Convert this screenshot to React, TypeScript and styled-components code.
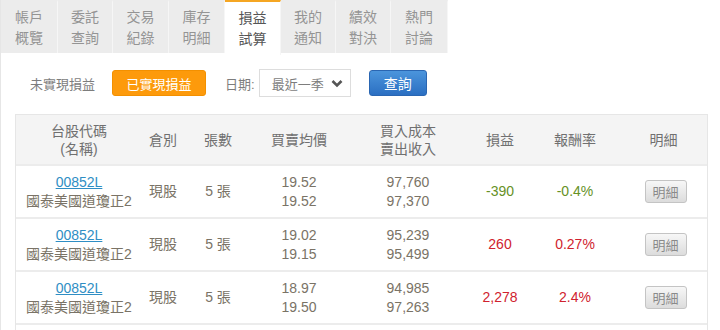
import React, { useState } from "react";
import styled, { createGlobalStyle } from "styled-components";

const GlobalStyle = createGlobalStyle`
  body {
    margin: 0;
    background: #fff;
    font-family: "Liberation Sans", "Noto Sans CJK TC", sans-serif;
    color: #7a7366;
  }
`;

const Page = styled.div`
  width: 720px;
  height: 330px;
  overflow: hidden;
  box-sizing: border-box;
  border-left: 1px solid #e6e6e6;
`;

const TabBar = styled.ul`
  margin: 0;
  padding: 0;
  list-style: none;
  display: flex;
  height: 53px;
  background: #fff;
`;

const Tab = styled.li<{ $active?: boolean; $w: number }>`
  width: ${(p) => p.$w}px;
  box-sizing: border-box;
  display: flex;
  flex-direction: column;
  align-items: center;
  justify-content: center;
  font-size: 14px;
  line-height: 21px;
  color: ${(p) => (p.$active ? "#555" : "#949494")};
  background: ${(p) => (p.$active ? "#fff" : "#ececec")};
  border-top: 2px solid ${(p) => (p.$active ? "#f5a623" : "#ececec")};
  border-right: 1px solid #f6f6f6;
  height: ${(p) => (p.$active ? "55px" : "53px")};
`;

const FilterRow = styled.div`
  display: flex;
  align-items: center;
  height: 28px;
  margin: 16px 0 0 29px;
  font-size: 13px;
`;

const Label = styled.span`
  color: #7d7d7d;
  margin-right: 17px;
`;

const OrangeButton = styled.button`
  font-family: inherit;
  font-size: 13px;
  color: #fff;
  background: #fd9a0b;
  border: 1px solid #f39000;
  border-radius: 3px;
  width: 94px;
  height: 26px;
  padding: 0;
  margin-right: 19px;
`;

const SelectBox = styled.div`
  display: flex;
  align-items: center;
  justify-content: space-between;
  box-sizing: border-box;
  width: 92px;
  height: 28px;
  border: 1px solid #ddd;
  padding: 0 7px 0 12px;
  margin: 0 18px 0 4px;
  color: #7d7d7d;
`;

const BlueButton = styled.button`
  font-family: inherit;
  font-size: 14px;
  color: #fff;
  background: linear-gradient(#4b95dc, #2b6fc2);
  border: 1px solid #2a66b2;
  border-radius: 3px;
  width: 58px;
  height: 26px;
  padding: 0;
`;

const cols = "126px 42px 68px 94px 124px 60px 90px 87px";

const Table = styled.div`
  margin: 17px 0 0 14px;
  width: 691px;
  border: 1px solid #e6e6e6;
  border-bottom: none;
  font-size: 14px;
`;

const HeadRow = styled.div`
  display: grid;
  grid-template-columns: ${cols};
  height: 49px;
  background: #f4f4f4;
  color: #707070;
  line-height: 18px;
`;

const Row = styled.div`
  display: grid;
  grid-template-columns: ${cols};
  height: 51px;
  border-top: 2px solid #ececec;
  line-height: 19px;
`;

const Cell = styled.div<{ $tone?: "up" | "down" }>`
  display: flex;
  flex-direction: column;
  align-items: center;
  justify-content: center;
  text-align: center;
  color: ${(p) => (p.$tone === "up" ? "#d0222e" : p.$tone === "down" ? "#669126" : "inherit")};
`;

const Code = styled.a`
  color: #2f8ec4;
  text-decoration: underline;
`;

const DetailButton = styled.button`
  font-family: inherit;
  font-size: 13px;
  color: #8a8a8a;
  background: linear-gradient(#f7f7f7, #dcdcdc);
  border: 1px solid #c4c4c4;
  border-radius: 3px;
  width: 42px;
  height: 23px;
  padding: 0;
  margin-left: 4px;
`;

const tabs = [
  ["帳戶", "概覽", 57],
  ["委託", "查詢", 55],
  ["交易", "紀錄", 56],
  ["庫存", "明細", 56],
  ["損益", "試算", 56],
  ["我的", "通知", 55],
  ["績效", "對決", 55],
  ["熱門", "討論", 57],
] as const;

const rows = [
  { prices: ["19.52", "19.52"], cost: ["97,760", "97,370"], pl: "-390", rate: "-0.4%", tone: "down" as const },
  { prices: ["19.02", "19.15"], cost: ["95,239", "95,499"], pl: "260", rate: "0.27%", tone: "up" as const },
  { prices: ["18.97", "19.50"], cost: ["94,985", "97,263"], pl: "2,278", rate: "2.4%", tone: "up" as const },
];

const Chevron = () => (
  <svg width="12" height="9" viewBox="0 0 12 9">
    <path d="M1.5 2 L6 6.5 L10.5 2" fill="none" stroke="#555" strokeWidth="2.6" />
  </svg>
);

export default function App() {
  const [active] = useState(4);
  return (
    <Page>
      <GlobalStyle />
      <TabBar>
        {tabs.map(([a, b, w], i) => (
          <Tab key={a} $active={i === active} $w={w}>
            <span>{a}</span>
            <span>{b}</span>
          </Tab>
        ))}
      </TabBar>
      <FilterRow>
        <Label>未實現損益</Label>
        <OrangeButton>已實現損益</OrangeButton>
        <Label as="span" style={{ marginRight: 0 }}>日期:</Label>
        <SelectBox>
          <span>最近一季</span>
          <Chevron />
        </SelectBox>
        <BlueButton>查詢</BlueButton>
      </FilterRow>
      <Table>
        <HeadRow>
          <Cell>
            <span>台股代碼</span>
            <span>(名稱)</span>
          </Cell>
          <Cell>倉別</Cell>
          <Cell>張數</Cell>
          <Cell>買賣均價</Cell>
          <Cell>
            <span>買入成本</span>
            <span>賣出收入</span>
          </Cell>
          <Cell>損益</Cell>
          <Cell>報酬率</Cell>
          <Cell>明細</Cell>
        </HeadRow>
        {rows.map((r, i) => (
          <Row key={i}>
            <Cell>
              <Code href="#">00852L</Code>
              <span>國泰美國道瓊正2</span>
            </Cell>
            <Cell>現股</Cell>
            <Cell>5 張</Cell>
            <Cell>
              <span>{r.prices[0]}</span>
              <span>{r.prices[1]}</span>
            </Cell>
            <Cell>
              <span>{r.cost[0]}</span>
              <span>{r.cost[1]}</span>
            </Cell>
            <Cell $tone={r.tone}>{r.pl}</Cell>
            <Cell $tone={r.tone}>{r.rate}</Cell>
            <Cell>
              <DetailButton>明細</DetailButton>
            </Cell>
          </Row>
        ))}
        <Row />
      </Table>
    </Page>
  );
}
